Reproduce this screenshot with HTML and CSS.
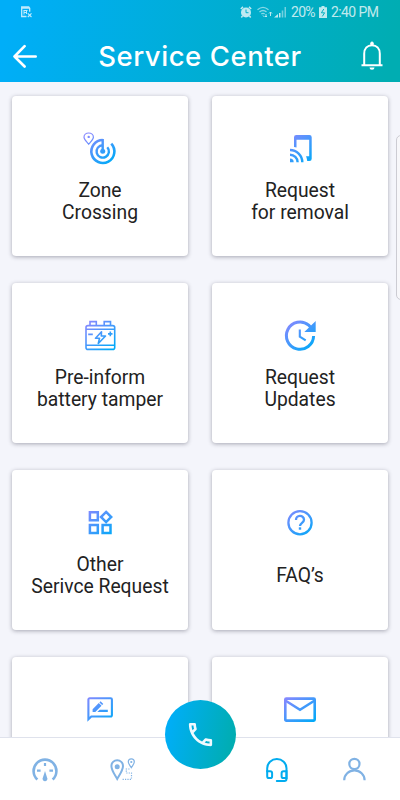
FILE: index.html
```
<!DOCTYPE html>
<html lang="en">
<head>
  <meta charset="UTF-8" />
  <meta name="viewport" content="width=device-width, initial-scale=1.0"/>
  <title>Service Center</title>
  <link rel="stylesheet" href="styles.css">
</head>
<body>

  <!-- gradient shared by the card icons -->
  <svg class="defs" width="0" height="0">
    <defs>
      <linearGradient id="grad" gradientUnits="userSpaceOnUse" x1="8" y1="5" x2="31" y2="33">
        <stop offset="0" stop-color="#8688ff"/>
        <stop offset="1" stop-color="#00aaf8"/>
      </linearGradient>
    </defs>
  </svg>

  <header>
    <div class="status-bar">
      <svg class="notice" width="12" height="12" viewBox="0 0 12 12" fill="none" stroke="#fff">
        <path d="M5.500 10.500h-4.800V.8h7l1 1.500v3.500M.7 2h8" stroke-width="1.300"/>
        <path d="M2.500 4.500h4M3 4.500v4M3 6.500h2.500M5.500 4.500v3.500" stroke-width="1"/>
        <path d="M6.800 7.300l3.700 3.700M10.500 7.300l-3.700 3.700" stroke-width="1.100"/>
      </svg>
      <div class="status-right">
        <svg width="12" height="12" viewBox="0 0 12 12">
          <circle cx="6" cy="6.500" r="5" fill="#fff"/>
          <path d="M.8 3L3 .9M11.200 3L9 .9M2.500 10L1.300 11.500M9.500 10l1.200 1.500" stroke="#fff" stroke-width="1.500"/>
          <path d="M6 3.500v3.200h2.500" fill="none" stroke="#04afcb" stroke-width="1"/>
        </svg>
        <svg class="wifi" width="16" height="12" viewBox="0 0 16 12" fill="none" stroke="#fff">
          <path d="M.5 3.800Q6 -1 11.500 3.800M2.500 6Q6 3 9.500 6M4.300 8Q6 6.700 7.700 8" stroke-width="1.300" opacity=".7"/>
          <path d="M6 9.500l1.500 1.500M9 8v3M8 10l1 1 1-1M13.500 10V6M12 7.500L13.500 6 15 7.500" stroke-width="1"/>
        </svg>
        <svg class="signal" width="13" height="12" viewBox="0 0 13 12" fill="#fff">
          <path d="M0 11.500l4-3.500v3.500zM5 7h1.500v4.500H5z"/>
          <path d="M7.700 4.500h1.600v7H7.700zM10.500 1H12v10.500h-1.500z" opacity=".6"/>
        </svg>
        <span class="percent">20%</span>
        <svg class="battery" width="8" height="12" viewBox="0 0 8 12">
          <path d="M2.500 0h3v1.300H8V12H0V1.300h2.500z" fill="#fff"/>
          <path d="M4.800 3L2.400 6.800h3.200L3.300 10.400" fill="none" stroke="#04afbf" stroke-width="1"/>
        </svg>
        <span class="clock">2:40 PM</span>
      </div>
    </div>
    <div class="title-bar">
      <a href="#" class="back" aria-label="Back">
        <svg width="24" height="24" viewBox="0 0 24 24" fill="none" stroke="#fff" stroke-width="2.600" stroke-linecap="round" stroke-linejoin="round">
          <path d="M22.700 12.500H1.500M11.600 2.200L1.500 12.500l10.100 10"/>
        </svg>
      </a>
      <h1>Service Center</h1>
      <a href="#" class="bell" aria-label="Notifications">
        <svg width="24" height="30" viewBox="0 0 24 30" fill="none" stroke="#fff" stroke-width="2">
          <path d="M1.500 24.200h21M4.200 24V12.800C4.200 7.500 7.500 4.200 12 4.200s7.800 3.300 7.800 8.600V24"/>
          <path d="M10.700 3.500V2.300a1.300 1.300 0 0 1 2.600 0v1.200z" fill="#fff" stroke-width="1"/>
          <path d="M9.500 26.500h5a2.500 2.300 0 0 1-5 0z" fill="#fff" stroke="none"/>
        </svg>
      </a>
    </div>
  </header>

  <main>
    <a class="card" href="#">
      <svg viewBox="0 0 40 40" fill="none" stroke="url(#grad)">
        <path d="M22.700 10a11.500 11.500 0 1 0 8.600 3.700" stroke-width="2.600"/>
        <path d="M22.700 15.200a6.200 6.200 0 1 0 4.600 2" stroke-width="2.400"/>
        <path d="M22.700 9v12h.01" stroke-width="2.400"/>
        <circle cx="22.700" cy="21.300" r="2.500" fill="url(#grad)" stroke="none"/>
        <path d="M8.700 14.200C6.200 11.200 4 9.500 4 7.300a4.700 4.300 0 0 1 9.400 0c0 2.200-2.200 3.900-4.700 6.900z" stroke-width="1.200"/>
        <circle cx="8.700" cy="6.900" r="1.200" fill="url(#grad)" stroke="none"/>
      </svg>
      <span class="label">Zone<br>Crossing</span>
    </a>
    <a class="card" href="#">
      <svg viewBox="0 0 40 40" fill="none" stroke="url(#grad)">
        <path d="M14 17V7.300A2.300 2.300 0 0 1 16.300 5h13.100a2.300 2.300 0 0 1 2.300 2.300v21.400a2.300 2.300 0 0 1-2.300 2.300h-2.200c-.2-2-.6-3.300-1.200-4.800h3.200V9.800H16.500v7.800c-.8-.3-1.600-.5-2.500-.6z" fill="url(#grad)" stroke="none"/>
        <path d="M10 20a12.300 12.300 0 0 1 12.300 12.200M10 24.700a7.600 7.600 0 0 1 7.600 7.500" stroke-width="2.400"/>
        <path d="M10 28.500a3.700 3.700 0 0 1 3.700 3.700H10z" fill="url(#grad)" stroke="none"/>
      </svg>
      <span class="label">Request<br>for removal</span>
    </a>
    <a class="card" href="#">
      <svg viewBox="0 0 40 40" fill="none" stroke="url(#grad)" stroke-width="1.600">
        <rect x="6" y="8.600" width="28.700" height="23.800" rx="2"/>
        <path d="M10 8.500V4.600h6.300v3.900M24.200 8.500V4.600h6.300v3.900M6 12.300h28.700M6 28.300h28.700"/>
        <path d="M8.200 17.400h4.600M28 16.900h4.500M30.300 14.600v4.600"/>
        <path d="M21.500 14.800l-6 6.500h4l-1.200 5.200 7.200-7.500h-4.200z" stroke-linejoin="round"/>
      </svg>
      <span class="label">Pre-inform<br>battery tamper</span>
    </a>
    <a class="card" href="#">
      <svg viewBox="0 0 40 40" fill="none" stroke="url(#grad)">
        <path d="M33.600 19A13.600 13.600 0 1 1 28.700 8.200l2 2" stroke-width="3"/>
        <path d="M35.700 4v11H24.300z" fill="url(#grad)" stroke="none"/>
        <path d="M19.800 12.500v7.200l5.900 3.700" stroke-width="2.100"/>
      </svg>
      <span class="label">Request<br>Updates</span>
    </a>
    <a class="card" href="#">
      <svg viewBox="0 0 40 40" fill="none" stroke="url(#grad)" stroke-width="2.500">
        <path d="M9.900 8.200h7.900v8.100H9.900zM9.900 21h7.900v7.900H9.900zM22.600 21h7.900v7.900h-7.900zM26.100 7.900l5.100 5.100-5.100 5.100L21 13z"/>
      </svg>
      <span class="label">Other<br>Serivce Request</span>
    </a>
    <a class="card" href="#">
      <svg viewBox="0 0 40 40" fill="none" stroke="url(#grad)">
        <circle cx="20" cy="18.700" r="11.600" stroke-width="2.300"/>
        <path d="M16 16a4 4 0 0 1 8-.3c0 3-4 3.200-4 6.300" stroke-width="2.300"/>
        <path d="M18.800 23.300h2.400v2.400h-2.400z" fill="url(#grad)" stroke="none"/>
      </svg>
      <span class="label">FAQ’s</span>
    </a>
    <a class="card" href="#" aria-label="Feedback">
      <svg viewBox="0 0 40 40" fill="none" stroke="url(#grad)">
        <path d="M8.400 28.300V8.500a1.200 1.200 0 0 1 1.200-1.200h21.100A1.200 1.200 0 0 1 31.900 8.500v15.800a1.200 1.200 0 0 1-1.200 1.200H11.300z" stroke-width="2.100"/>
        <path d="M12.600 21v-2.700l6.200-6.200 2.700 2.700-6.200 6.200zM19.400 11.400l1.200-1.200 2.700 2.700-1.200 1.200zM17.300 21l2.300-2.300h8.200V21z" fill="url(#grad)" stroke="none"/>
      </svg>
    </a>
    <a class="card" href="#" aria-label="Mail">
      <svg viewBox="0 0 40 40" fill="none" stroke="url(#grad)" stroke-width="2.600">
        <rect x="5.300" y="7.600" width="29.400" height="22" rx="1"/>
        <path d="M5.300 9.500L20 18.800l14.700-9.300"/>
      </svg>
    </a>
  </main>

  <div class="edge-handle"></div>

  <nav>
    <a href="#" aria-label="Dashboard">
      <svg viewBox="0 0 40 40" fill="none" stroke="#80b2e4">
        <path d="M12.400 29.500a11.400 11.400 0 1 1 15.200 0" stroke-width="2.600"/>
        <path d="M20 13v3M12 20.700h3.600M24.400 20.700H28" stroke-width="2.200"/>
        <path d="M20 21l2.300 7.200a2.400 2.400 0 1 1-4.600 0z" fill="#80b2e4" stroke="none"/>
      </svg>
    </a>
    <a href="#" aria-label="Route">
      <svg viewBox="0 0 40 40" fill="none" stroke="#80b2e4">
        <path d="M14.200 29C11 23.500 8.400 20 8.400 16a5.800 5.800 0 0 1 11.600 0c0 4-2.600 7.500-5.800 13z" stroke-width="2"/>
        <circle cx="14.200" cy="16.800" r="2.500" fill="#80b2e4" stroke="none"/>
        <path d="M28.300 17.700C26.500 14.800 25.300 13.600 25.300 11.800a3 3 0 0 1 6 0c0 1.800-1.200 3-3 5.900z" stroke-width="1.200"/>
        <circle cx="28.300" cy="12" r="1.100" fill="#80b2e4" stroke="none"/>
        <path d="M26.500 19h-3.200v4h5.200v6.300h-10" stroke-width="1.200" stroke-dasharray="1.200 1.200"/>
      </svg>
    </a>
    <a href="#" class="call" aria-label="Call">
      <svg viewBox="0 0 24 24" fill="#f1faff">
        <path d="M6.540 5c.06.89.21 1.760.45 2.590l-1.200 1.200c-.41-1.200-.67-2.470-.76-3.790h1.510m9.860 12.020c.85.24 1.720.39 2.600.45v1.490c-1.320-.09-2.590-.35-3.800-.75l1.200-1.190M7.500 3H4c-.55 0-1 .45-1 1 0 9.390 7.610 17 17 17 .55 0 1-.45 1-1v-3.490c0-.55-.45-1-1-1-1.240 0-2.450-.2-3.570-.57-.1-.04-.21-.05-.31-.05-.26 0-.51.1-.71.290l-2.200 2.200c-2.830-1.450-5.150-3.760-6.590-6.590l2.200-2.200c.28-.28.36-.67.25-1.020C8.700 6.450 8.500 5.250 8.500 4c0-.55-.45-1-1-1z"/>
      </svg>
    </a>
    <a href="#" aria-label="Service">
      <svg viewBox="0 0 40 40" fill="none" stroke="#02acef" stroke-width="2">
        <path d="M9.200 21.500v-3.300a9.600 9.200 0 0 1 19.300 0v10.600a2.200 2.200 0 0 1-2.200 2.200h-7.500" stroke-linecap="round"/>
        <path d="M9.200 21.200h3a1.900 1.900 0 0 1 1.900 1.900v3.100a1.900 1.900 0 0 1-1.900 1.900h-1.100a1.900 1.900 0 0 1-1.900-1.900zM28.500 21.200h-3a1.900 1.900 0 0 0-1.900 1.900v3.100a1.900 1.900 0 0 0 1.900 1.900h3z"/>
      </svg>
    </a>
    <a href="#" aria-label="Profile">
      <svg viewBox="0 0 40 40" fill="none" stroke="#80b2e4" stroke-width="2.200">
        <circle cx="18.400" cy="14" r="5.100"/>
        <path d="M8.200 30.200a10.200 9.800 0 0 1 20.400 0"/>
      </svg>
    </a>
  </nav>

</body>
</html>
```
FILE: styles.css
```
* {
  box-sizing: border-box;
}

body {
  margin: 0;
  height: 100vh;
  display: flex;
  flex-direction: column;
  overflow: hidden;
  position: relative;
  background-color: #f4f5fb;
  color: #222;
  font-family: Roboto, "Liberation Sans", sans-serif;
}

a {
  color: inherit;
  text-decoration: none;
}

svg {
  display: block;
}

.defs {
  position: absolute;
}

header {
  flex: none;
  height: 82px;
  background: linear-gradient(102deg, #00aef8 3%, #00adb2 97%);
  color: white;
}

.status-bar {
  height: 24px;
  display: flex;
  justify-content: space-between;
  align-items: center;
  padding: 0 21px;
  opacity: 0.75;
}

.status-right {
  display: flex;
  align-items: center;
  font-size: 14px;
}

.wifi {
  margin-left: 5px;
}

.signal {
  margin-left: 1px;
}

.percent {
  width: 24px;
  margin-left: 4px;
  letter-spacing: -0.7px;
}

.battery {
  margin: 0 4px;
}

.clock {
  width: 48px;
  letter-spacing: -0.6px;
  white-space: nowrap;
}

.title-bar {
  height: 58px;
  display: grid;
  grid-template-columns: 60px 1fr 60px;
  align-items: center;
  padding-top: 5px;
}

.back {
  padding-left: 13px;
}

.bell {
  padding-left: 20px;
}

h1 {
  margin: 0;
  text-align: center;
  white-space: nowrap;
  font-family: Inter, "Open Sans", sans-serif;
  font-size: 27.500px;
  font-weight: 500;
  line-height: 36px;
  letter-spacing: 0.55px;
}

main {
  flex: 1;
  min-height: 0;
  overflow: hidden;
  display: grid;
  grid-template-columns: 1fr 1fr;
  grid-auto-rows: 160px;
  gap: 27px 24px;
  padding: 14px 12px 0;
}

.card {
  display: flex;
  flex-direction: column;
  align-items: center;
  padding-top: 34px;
  background-color: white;
  border-radius: 4px;
  box-shadow: 0 1px 4px rgba(50, 50, 70, 0.4);
}

.card svg {
  width: 40px;
  height: 40px;
}

.label {
  height: 44px;
  margin-top: 10px;
  display: flex;
  align-items: center;
  text-align: center;
  white-space: nowrap;
  font-size: 19.300px;
  line-height: 22px;
}

.edge-handle {
  position: absolute;
  top: 135px;
  right: -8px;
  width: 12px;
  height: 165px;
  background-color: #f7f7fa;
  border: 1px solid #ccccd3;
  border-radius: 5px;
}

nav {
  flex: none;
  height: 63px;
  display: grid;
  grid-template-columns: repeat(5, 1fr);
  justify-items: center;
  padding: 12px 5px 0 6px;
  background-color: white;
  border-top: 1px solid #dfe2ec;
}

nav svg {
  width: 40px;
  height: 40px;
}

/* call button sits over the top edge of the bar */
nav .call {
  position: relative;
  top: -50px;
  width: 71px;
  height: 69px;
  display: flex;
  align-items: center;
  justify-content: center;
  border-radius: 50%;
  background: linear-gradient(102deg, #00aef8 8%, #00adb0 92%);
}

.call svg {
  width: 31px;
  height: 31px;
}
```
